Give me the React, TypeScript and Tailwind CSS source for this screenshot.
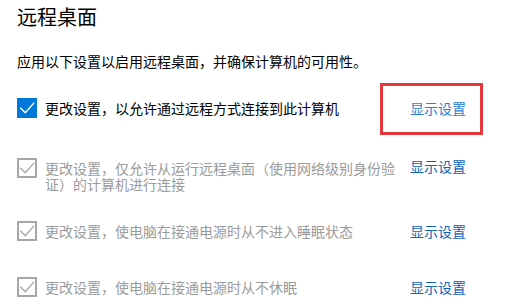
import React from "react";

function Check({ checked }: { checked: boolean }) {
  if (checked) {
    return (
      <div className="w-[20px] h-[20px] shrink-0 bg-[#0078d7] flex items-center justify-center">
        <svg width="20" height="20" viewBox="0 0 20 20" fill="none">
          <path d="M3.2 9.8 L8.3 14.8 L17.2 4.6" stroke="#ffffff" strokeWidth="1.4" />
        </svg>
      </div>
    );
  }
  return (
    <div className="w-[20px] h-[20px] shrink-0 border-2 border-[#a6a6a6] bg-white flex items-center justify-center">
      <svg width="16" height="16" viewBox="0 0 16 16" fill="none">
        <path d="M1.2 7.8 L6.3 12.8 L15.2 2.6" stroke="#a6a6a6" strokeWidth="1.3" />
      </svg>
    </div>
  );
}

function Row({
  checked,
  text,
  mt,
  linkColor,
  linkPad = "pt-[2px]",
  children,
}: {
  checked: boolean;
  text: string;
  mt: string;
  linkColor: string;
  linkPad?: string;
  children?: React.ReactNode;
}) {
  return (
    <div className={`relative flex items-start ${mt}`}>
      <Check checked={checked} />
      <div
        className={`ml-[8px] w-[352px] text-[14px] leading-[16px] pt-[2px] ${
          checked ? "text-[#000000]" : "text-[#9b9b9b]"
        }`}
      >
        {text}
      </div>
      <div className={`ml-[13px] text-[14px] leading-[16px] ${linkPad} ${linkColor}`}>显示设置</div>
      {children}
    </div>
  );
}

export default function App() {
  return (
    <div
      className="w-[508px] h-[306px] bg-white overflow-hidden pl-[17px] pt-[3px]"
      style={{ fontFamily: '"Noto Sans CJK SC", "Noto Sans", sans-serif' }}
    >
      <div className="text-[20px] leading-[28px] text-[#000000]">远程桌面</div>
      <div className="mt-[20px] text-[14px] leading-[20px] text-[#000000]">
        应用以下设置以启用远程桌面，并确保计算机的可用性。
      </div>
      <Row
        checked
        mt="mt-[27px]"
        linkColor="text-[#2a7fd0]"
        text="更改设置，以允许通过远程方式连接到此计算机"
      >
        <div className="absolute left-[363px] top-[-15px] w-[103px] h-[52px] border-[3px] border-[#e5383c]" />
      </Row>
      <Row
        checked={false}
        mt="mt-[40px]"
        linkColor="text-[#0f64b8]"
        linkPad="pt-0"
        text="更改设置，仅允许从运行远程桌面（使用网络级别身份验证）的计算机进行连接"
      />
      <Row
        checked={false}
        mt="mt-[29px]"
        linkColor="text-[#0f64b8]"
        text="更改设置，使电脑在接通电源时从不进入睡眠状态"
      />
      <Row
        checked={false}
        mt="mt-[36px]"
        linkColor="text-[#0f64b8]"
        text="更改设置，使电脑在接通电源时从不休眠"
      />
    </div>
  );
}
